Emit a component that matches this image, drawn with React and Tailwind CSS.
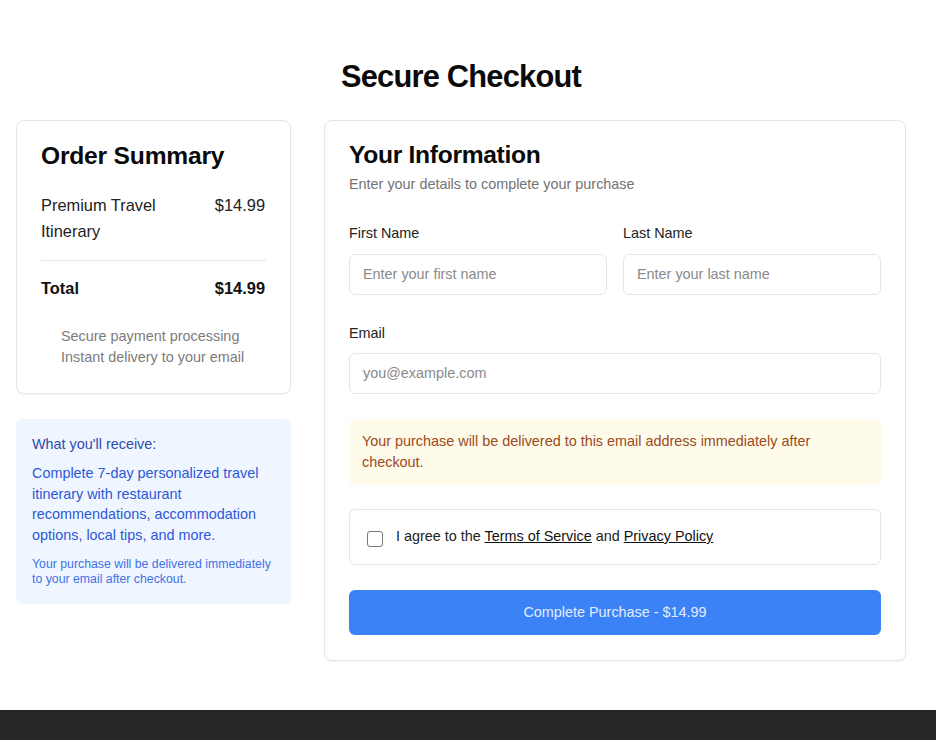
export default function App() {
  return (
    <div className="min-h-screen bg-white font-['Liberation_Sans',Arial,sans-serif] text-[#111]">
      <main className="pt-[59px] pb-[49px] pl-4 w-[906px]">
        <h1 className="text-center text-[30.8px] leading-[36px] font-bold tracking-tight text-[#0a0a0a]">
          Secure Checkout
        </h1>
        <div className="mt-[25px] w-[890px] grid grid-cols-[275px_582px] gap-[33px] items-start">
          {/* Left column */}
          <div className="flex flex-col">
            <div className="rounded-lg border border-[#e5e5e5] bg-white px-6 pt-6 pb-[25px] shadow-[0_1px_2px_rgba(0,0,0,0.05)]">
              <h2 className="text-[24.6px] leading-[22px] font-bold tracking-[-0.2px] text-[#0a0a0a]">
                Order Summary
              </h2>
              <div className="mt-[25px] flex justify-between gap-4 text-[16.4px] leading-[26px] text-[#222]">
                <span className="max-w-[140px]">Premium Travel Itinerary</span>
                <span className="pr-[1px]">$14.99</span>
              </div>
              <div className="mt-4 border-t border-[#e5e5e5]" />
              <div className="pt-[15px] flex justify-between text-[16.4px] leading-[24px] font-bold text-[#111]">
                <span>Total</span>
                <span className="pr-[1px]">$14.99</span>
              </div>
              <ul className="mt-[26px] pl-5 text-[14.4px] leading-[21px] text-[#7c7c7c]">
                <li>Secure payment processing</li>
                <li>Instant delivery to your email</li>
              </ul>
            </div>
            <div className="mt-[25px] rounded-md bg-[#eff6ff] px-4 pt-4 pb-[17px]">
              <p className="text-[14.4px] leading-[18px] text-[#2f4bb0]">What you'll receive:</p>
              <p className="mt-[10px] text-[14.4px] leading-[20.6px] text-[#2d58d8]">
                Complete 7-day personalized travel itinerary with restaurant recommendations, accommodation options, local tips, and more.
              </p>
              <p className="mt-[12px] text-[12.3px] leading-[15px] text-[#3f72e6]">
                Your purchase will be delivered immediately to your email after checkout.
              </p>
            </div>
          </div>

          {/* Right column */}
          <div className="rounded-lg border border-[#e5e5e5] bg-white px-6 pt-6 pb-[25px] shadow-[0_1px_2px_rgba(0,0,0,0.05)]">
            <h2 className="text-[24.6px] leading-[20px] font-bold tracking-[-0.3px] text-[#0a0a0a]">
              Your Information
            </h2>
            <p className="mt-[9px] text-[14.4px] leading-[20px] text-[#737373]">
              Enter your details to complete your purchase
            </p>
            <div className="mt-[29px] grid grid-cols-2 gap-4">
              <div>
                <label className="block text-[14.4px] leading-[20px] text-[#222]">First Name</label>
                <div className="mt-[11px] h-[41px] rounded-md border border-[#e5e5e5] px-[13px] flex items-center text-[14.4px] text-[#8a8a8a]">
                  Enter your first name
                </div>
              </div>
              <div>
                <label className="block text-[14.4px] leading-[20px] text-[#222]">Last Name</label>
                <div className="mt-[11px] h-[41px] rounded-md border border-[#e5e5e5] px-[13px] flex items-center text-[14.4px] text-[#8a8a8a]">
                  Enter your last name
                </div>
              </div>
            </div>
            <label className="mt-[28px] block text-[14.4px] leading-[20px] text-[#222]">Email</label>
            <div className="mt-[10px] h-[41px] rounded-md border border-[#e5e5e5] px-[13px] flex items-center text-[14.4px] text-[#8a8a8a]">
              you@example.com
            </div>
            <div className="mt-[25px] rounded-md bg-[#fefbea] px-[13px] py-3 text-[14.4px] leading-[21px] text-[#9c4a1c]">
              Your purchase will be delivered to this email address immediately after checkout.
            </div>
            <div className="mt-6 rounded-md border border-[#e5e5e5] px-4 pt-4 pb-[17px] flex items-start gap-[13px]">
              <span className="mt-[5px] ml-[1px] w-[16px] h-[16px] shrink-0 rounded-[3px] border border-[#777] bg-white" />
              <p className="text-[14.4px] leading-[21px] text-[#222]">
                I agree to the <span className="underline text-[#111]">Terms of Service</span> and{" "}
                <span className="underline text-[#111]">Privacy Policy</span>
              </p>
            </div>
            <button className="mt-[25px] w-full h-[45px] rounded-md bg-[#3b82f6] text-[14.4px] text-[#e3ecff]">
              Complete Purchase - $14.99
            </button>
          </div>
        </div>
      </main>
      <footer className="h-20 bg-[#262626]" />
    </div>
  );
}
